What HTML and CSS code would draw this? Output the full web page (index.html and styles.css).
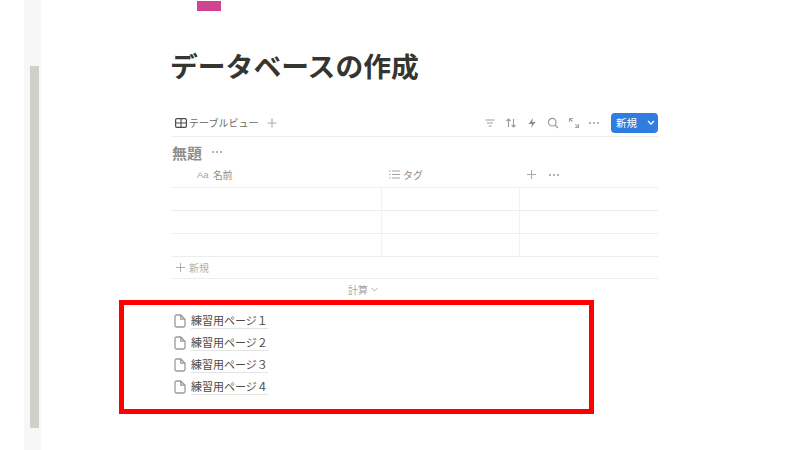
FILE: index.html
```html
<!DOCTYPE html>
<html lang="ja">
<head>
<meta charset="utf-8">
<title>データベースの作成</title>
<link rel="stylesheet" href="styles.css">
</head>
<body>
<div class="app">
  <div class="track"><div class="thumb"></div></div>
  <main class="page">
    <div class="pink"></div>
    <h1 class="title">データベースの作成</h1>
    <div class="toolbar">
      <div class="view">
        <svg class="ic-table" width="12" height="10" viewBox="0 0 12 10"><rect x=".6" y=".6" width="10.8" height="8.8" rx="1.4" fill="none" stroke="#4a4a47" stroke-width="1.2"/><path d="M.6 5h10.800M6 .6v8.800" stroke="#4a4a47" stroke-width="1.1" fill="none"/></svg>
        <span class="view-name">テーブルビュー</span>
        <svg class="ic-plus" width="10" height="10" viewBox="0 0 10 10"><path d="M5 .5v9M.5 5h9" stroke="#aaa" stroke-width="1.1"/></svg>
      </div>
      <div class="tools">
        <svg width="12" height="12" viewBox="0 0 12 12"><path d="M1.500 3h9M3 6h6M4.500 9h3" stroke="#9b9a97" stroke-width="1.100" fill="none"/></svg>
        <svg width="12" height="12" viewBox="0 0 12 12"><path d="M3.500 10V2M1.500 4l2-2 2 2M8.500 2v8M6.500 8l2 2 2-2" stroke="#9b9a97" stroke-width="1.100" fill="none"/></svg>
        <svg width="12" height="12" viewBox="0 0 12 12"><path d="M7 1 2.500 7H6l-1 4 4.500-6H6.300z" fill="#8f8e8b"/></svg>
        <svg width="12" height="12" viewBox="0 0 12 12"><circle cx="5.200" cy="5.200" r="3.800" fill="none" stroke="#9b9a97" stroke-width="1.200"/><path d="m8 8 3 3" stroke="#9b9a97" stroke-width="1.200"/></svg>
        <svg width="12" height="12" viewBox="0 0 12 12"><path d="M1.500 5V1.500H5M1.500 1.500l3 3M10.500 7v3.500H7M10.500 10.500l-3-3" stroke="#a5a4a1" stroke-width="1.100" fill="none"/></svg>
        <span class="dots">
          <i></i><i></i><i></i>
        </span>
        <div class="new-btn"><span class="new-label">新規</span><svg width="8" height="5" viewBox="0 0 8 5"><path d="m1 1 3 3 3-3" stroke="#fff" stroke-width="1.300" fill="none"/></svg></div>
      </div>
    </div>
    <div class="db-head">
      <span class="db-title">無題</span>
      <span class="dots"><i></i><i></i><i></i></span>
    </div>
    <div class="table">
      <div class="row head">
        <div class="cell name"><span class="aa">Aa</span><span>名前</span></div>
        <div class="cell tag">
          <svg width="11" height="9" viewBox="0 0 11 9"><path d="M3 1h8M3 4.500h8M3 8h8M0 1h1.500M0 4.500h1.500M0 8h1.500" stroke="#a5a4a1" stroke-width="1"/></svg>
          <span>タグ</span>
        </div>
        <div class="cell extra">
          <svg width="9" height="9" viewBox="0 0 9 9"><path d="M4.500 0v9M0 4.500h9" stroke="#aaa" stroke-width="1"/></svg>
          <span class="dots"><i></i><i></i><i></i></span>
        </div>
      </div>
      <div class="row"><div class="cell name"></div><div class="cell tag"></div><div class="cell extra"></div></div>
      <div class="row"><div class="cell name"></div><div class="cell tag"></div><div class="cell extra"></div></div>
      <div class="row"><div class="cell name"></div><div class="cell tag"></div><div class="cell extra"></div></div>
      <div class="add-row">
        <svg width="9" height="9" viewBox="0 0 9 9"><path d="M4.500 0v9M0 4.500h9" stroke="#b0afac" stroke-width="1"/></svg>
        <span>新規</span>
      </div>
      <div class="calc"><span>計算</span><svg width="7" height="5" viewBox="0 0 7 5"><path d="m.5 1 3 3 3-3" stroke="#b0afac" stroke-width="1" fill="none"/></svg></div>
    </div>
    <ul class="pages">
      <li class="page-item"><svg width="12" height="14" viewBox="0 0 12 14"><path d="M1 2.500A1.500 1.500 0 0 1 2.500 1h4.300L11 5.200v6.300a1.500 1.500 0 0 1-1.500 1.500h-7A1.500 1.500 0 0 1 1 11.500zM6.800 1v4.200H11" fill="none" stroke="#9b9a97" stroke-width="1.300"/></svg><span class="page-name">練習用ページ１</span></li>
      <li class="page-item"><svg width="12" height="14" viewBox="0 0 12 14"><path d="M1 2.500A1.500 1.500 0 0 1 2.500 1h4.300L11 5.200v6.300a1.500 1.500 0 0 1-1.500 1.500h-7A1.500 1.500 0 0 1 1 11.500zM6.800 1v4.200H11" fill="none" stroke="#9b9a97" stroke-width="1.300"/></svg><span class="page-name">練習用ページ２</span></li>
      <li class="page-item"><svg width="12" height="14" viewBox="0 0 12 14"><path d="M1 2.500A1.500 1.500 0 0 1 2.500 1h4.300L11 5.200v6.300a1.500 1.500 0 0 1-1.500 1.500h-7A1.500 1.500 0 0 1 1 11.500zM6.800 1v4.200H11" fill="none" stroke="#9b9a97" stroke-width="1.300"/></svg><span class="page-name">練習用ページ３</span></li>
      <li class="page-item"><svg width="12" height="14" viewBox="0 0 12 14"><path d="M1 2.500A1.500 1.500 0 0 1 2.500 1h4.300L11 5.200v6.300a1.500 1.500 0 0 1-1.500 1.500h-7A1.500 1.500 0 0 1 1 11.500zM6.800 1v4.200H11" fill="none" stroke="#9b9a97" stroke-width="1.300"/></svg><span class="page-name">練習用ページ４</span></li>
    </ul>
  </main>
  <div class="highlight"></div>
</div>
</body>
</html>
```
FILE: styles.css
```css
* { box-sizing: border-box; }
html, body { margin: 0; padding: 0; }
body {
  width: 800px;
  height: 450px;
  overflow: hidden;
  background: #fff;
  color: #37352f;
  font-family: "Noto Sans CJK JP", "Noto Sans", sans-serif;
}
.app {
  position: relative;
  display: flex;
  width: 800px;
  height: 450px;
}
.track {
  flex: none;
  width: 17px;
  height: 450px;
  margin-left: 24px;
  padding: 66px 2px 0 6px;
  background: #f7f7f5;
}
.thumb { height: 362px; background: #d0d0ca; }
.page {
  flex: none;
  width: 487px;
  margin-left: 130px;
}
.pink {
  width: 24px;
  height: 10px;
  margin: 1px 0 0 26px;
  background: #cf4390;
}
.title {
  margin: 34px 0 0 -1px;
  font-size: 27.800px;
  line-height: 40px;
  font-weight: 700;
  color: #37352f;
}
.toolbar {
  display: flex;
  align-items: center;
  justify-content: space-between;
  height: 30px;
  margin-top: 22px;
  padding-top: 2px;
  border-bottom: 1px solid #ededeb;
}
.view { display: flex; align-items: center; padding-left: 4px; }
.view-name { margin-left: 2px; font-size: 10px; color: #6b6a67; }
.ic-plus { margin-left: 9px; }
.tools { display: flex; align-items: center; gap: 9px; }
.dots { display: inline-flex; gap: 2px; align-items: center; }
.dots i { width: 2px; height: 2px; border-radius: 50%; background: #9b9a97; }
.new-btn {
  display: flex;
  align-items: center;
  width: 47px;
  height: 20px;
  margin-left: 3px;
  padding-left: 5px;
  border-radius: 4px;
  background: #2f7de1;
  color: #fff;
  font-size: 10.500px;
}
.new-label { width: 31px; }
.db-head {
  display: flex;
  align-items: center;
  gap: 10px;
  height: 28px;
  padding: 2px 0 0 1px;
}
.db-title { font-size: 15px; font-weight: 700; color: #8f8e8b; }
.row {
  display: grid;
  grid-template-columns: 211px 138px 138px;
  height: 23px;
  border-bottom: 1px solid #ededeb;
}
.row.head { padding-bottom: 3px; }
.cell { display: flex; align-items: center; border-right: 1px solid #f1f1ef; }
.cell.extra { border-right: 0; }
.head .cell {
  border-right: 0;
  font-size: 10px;
  color: #8f8e8b;
}
.head .name { padding-left: 26px; gap: 4px; }
.aa { font-family: "Liberation Sans", sans-serif; font-size: 9.500px; color: #a5a4a1; }
.head .tag { padding-left: 7px; gap: 3px; }
.head .extra { padding-left: 7px; gap: 13px; }
.add-row {
  display: flex;
  align-items: center;
  gap: 4px;
  height: 22px;
  padding-left: 5px;
  border-bottom: 1px solid #ededeb;
  font-size: 10px;
  color: #b0afac;
}
.calc {
  display: flex;
  align-items: center;
  justify-content: flex-end;
  gap: 3px;
  width: 211px;
  height: 21px;
  padding-right: 4px;
  font-size: 10px;
  color: #a5a4a1;
}
.pages {
  margin: 10px 0 0;
  padding: 0 0 0 3px;
  list-style: none;
}
.page-item {
  display: flex;
  align-items: center;
  gap: 5px;
  height: 22px;
}
.page-name {
  font-size: 11px;
  line-height: 15px;
  color: #4a4a47;
  border-bottom: 1px solid #e4e4e2;
}
.highlight {
  position: absolute;
  left: 119px;
  top: 300px;
  width: 475px;
  height: 114px;
  border: 5px solid #f00;
}
```
